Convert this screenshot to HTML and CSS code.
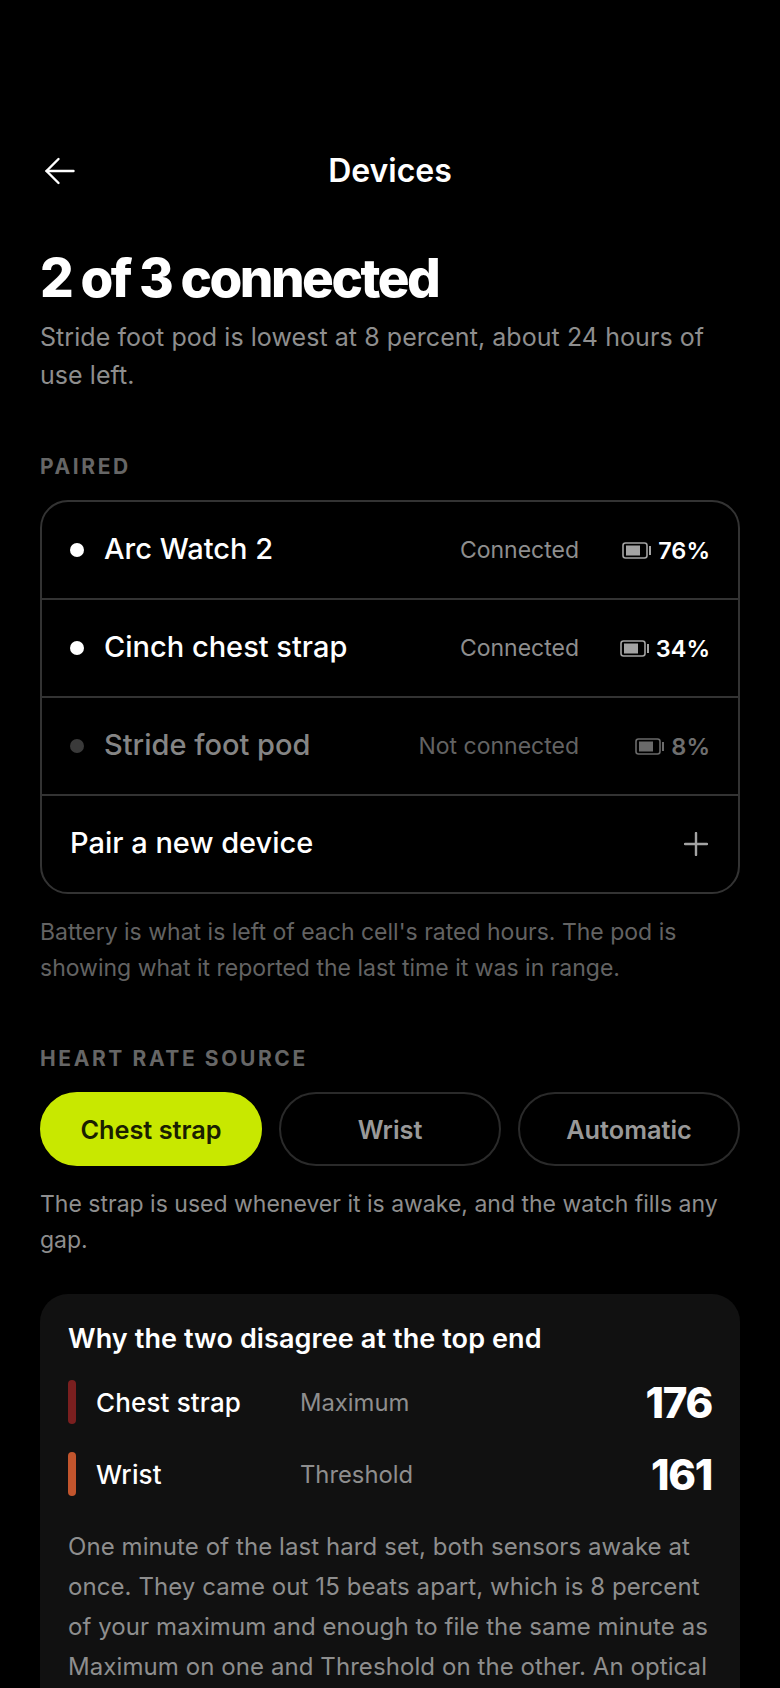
FILE: index.html
```html
<!DOCTYPE html>
<html lang="en">
<head>
<meta charset="utf-8">
<title>Devices</title>
<link rel="stylesheet" href="styles.css">
</head>
<body>
<main class="screen">
  <header class="topbar">
    <button class="back" aria-label="Back">
      <svg width="36" height="36" viewBox="0 0 36 36" fill="none" stroke="#fff" stroke-width="2.4" stroke-linecap="round" stroke-linejoin="round"><path d="M33.5 18H6.5"/><path d="M18.5 6 6.5 18l12 12"/></svg>
    </button>
    <h2 class="title">Devices</h2>
  </header>

  <h1 class="headline">2 of 3 connected</h1>
  <p class="lede">Stride foot pod is lowest at 8 percent, about 24 hours of use left.</p>

  <h3 class="eyebrow paired">PAIRED</h3>
  <section class="list">
    <div class="row">
      <span class="dot"></span><span class="name">Arc Watch 2</span>
      <span class="status">Connected</span>
      <span class="batt"><svg class="cell" viewBox="0 0 29 17" fill="none"><rect x="1" y="1" width="24" height="15" rx="2.5" stroke="currentColor" stroke-width="1.6"/><rect x="4" y="3.5" width="14" height="10" fill="currentColor"/><rect x="27" y="4" width="2" height="9" fill="currentColor"/></svg><b>76%</b></span>
    </div>
    <div class="row">
      <span class="dot"></span><span class="name">Cinch chest strap</span>
      <span class="status">Connected</span>
      <span class="batt"><svg class="cell" viewBox="0 0 29 17" fill="none"><rect x="1" y="1" width="24" height="15" rx="2.5" stroke="currentColor" stroke-width="1.6"/><rect x="4" y="3.5" width="14" height="10" fill="currentColor"/><rect x="27" y="4" width="2" height="9" fill="currentColor"/></svg><b>34%</b></span>
    </div>
    <div class="row off">
      <span class="dot"></span><span class="name">Stride foot pod</span>
      <span class="status">Not connected</span>
      <span class="batt"><svg class="cell" viewBox="0 0 29 17" fill="none"><rect x="1" y="1" width="24" height="15" rx="2.5" stroke="currentColor" stroke-width="1.6"/><rect x="4" y="3.5" width="14" height="10" fill="currentColor"/><rect x="27" y="4" width="2" height="9" fill="currentColor"/></svg><b>8%</b></span>
    </div>
    <div class="row">
      <span class="name pair">Pair a new device</span>
      <svg class="plus" width="24" height="24" viewBox="0 0 24 24" fill="none" stroke="#a3a3a3" stroke-width="2.4" stroke-linecap="round"><path d="M12 1v22M1 12h22"/></svg>
    </div>
  </section>
  <p class="note">Battery is what is left of each cell's rated hours. The pod is showing what it reported the last time it was in range.</p>

  <h3 class="eyebrow source">HEART RATE SOURCE</h3>
  <div class="segments">
    <button class="seg on">Chest strap</button>
    <button class="seg">Wrist</button>
    <button class="seg">Automatic</button>
  </div>
  <p class="hint">The strap is used whenever it is awake, and the watch fills any gap.</p>

  <section class="panel">
    <h4 class="panel-title">Why the two disagree at the top end</h4>
    <div class="reading">
      <span class="bar max"></span><span class="sensor">Chest strap</span><span class="zone">Maximum</span><span class="bpm">176</span>
    </div>
    <div class="reading">
      <span class="bar thr"></span><span class="sensor">Wrist</span><span class="zone">Threshold</span><span class="bpm">161</span>
    </div>
    <p class="explain">One minute of the last hard set, both sensors awake at once. They came out 15 beats apart, which is 8 percent of your maximum and enough to file the same minute as Maximum on one and Threshold on the other. An optical</p>
  </section>
</main>
</body>
</html>
```

FILE: styles.css
```css
* { box-sizing: border-box; margin: 0; padding: 0; }
html, body { background: #000; height: 1688px; overflow: hidden; }
body { font-family: Inter, "Liberation Sans", sans-serif; color: #fff; }
.screen { padding: 132px 40px 0; }
.topbar { position: relative; height: 78px; display: flex; align-items: center; justify-content: center; }
.back { position: absolute; left: 0; top: 21px; background: none; border: 0; width: 36px; height: 36px; display: block; line-height: 0; }
.title { font-size: 32px; font-weight: 600; line-height: 36px; }
.headline { margin-top: 38px; font-size: 53px; font-weight: 800; line-height: 60px; letter-spacing: -2.5px; }
.lede { margin-top: 11px; font-size: 25px; line-height: 37.5px; letter-spacing: 0.06px; color: #8e8e8e; }
.eyebrow { font-size: 21px; line-height: 28px; font-weight: 700; letter-spacing: 2.6px; color: #666; }
.paired { margin-top: 59px; }
.list { margin-top: 19px; border: 2px solid #333; border-radius: 28px; }
.row { height: 98px; display: flex; align-items: center; padding: 0 28px; border-bottom: 2px solid #333; }
.row:last-child { border-bottom: 0; height: 96px; }
.dot { width: 14px; height: 14px; border-radius: 50%; background: #fff; margin-right: 20px; }
.name { font-size: 29px; font-weight: 500; line-height: 34px; padding-bottom: 2px; color: #fff; }
.status { margin-left: auto; font-size: 23px; color: #8e8e8e; }
.batt { width: 131px; display: flex; justify-content: flex-end; align-items: center; gap: 7px; font-size: 23.5px; color: #fff; }
.batt b { font-weight: 600; }
.cell { width: 29px; height: 17px; color: #a3a3a3; }
.off .dot { background: #3a3a3a; }
.off .name { color: #858585; }
.off .batt { color: #6e6e6e; }
.off .status { color: #636363; }
.off .cell { color: #6a6a6a; }
.pair { flex: 1; }
.plus { margin-right: 2px; }
.note { margin-top: 20px; font-size: 23px; line-height: 36px; color: #636363; }
.source { margin-top: 59px; }
.segments { margin-top: 19px; display: grid; grid-template-columns: repeat(3, 1fr); gap: 17px; }
.seg { height: 74px; border-radius: 37px; background: transparent; border: 2px solid #2a2a2a; color: #999; font: 600 25.3px Inter, sans-serif; }
.seg.on { background: #c8e800; border-color: #c8e800; color: #1a1f00; }
.hint { margin-top: 20px; font-size: 23px; line-height: 36px; color: #8e8e8e; }
.panel { margin-top: 36px; background: #111; border-radius: 28px; padding: 28px 28px; }
.panel-title { font-size: 27px; font-weight: 600; line-height: 34px; letter-spacing: 0.1px; }
.reading { display: flex; align-items: center; height: 44px; margin-top: 24px; }
.reading + .reading { margin-top: 28px; }
.bar { width: 8px; height: 44px; border-radius: 4px; margin-right: 20px; }
.max { background: #7a1f1f; }
.thr { background: #c2552d; }
.sensor { width: 204px; font-size: 26px; font-weight: 500; letter-spacing: 0.15px; }
.zone { flex: 1; font-size: 23.8px; color: #8e8e8e; }
.bpm { font-size: 42px; font-weight: 800; letter-spacing: -1.3px; }
.explain { margin-top: 31px; font-size: 24px; line-height: 40px; letter-spacing: 0.08px; color: #8e8e8e; }
```
